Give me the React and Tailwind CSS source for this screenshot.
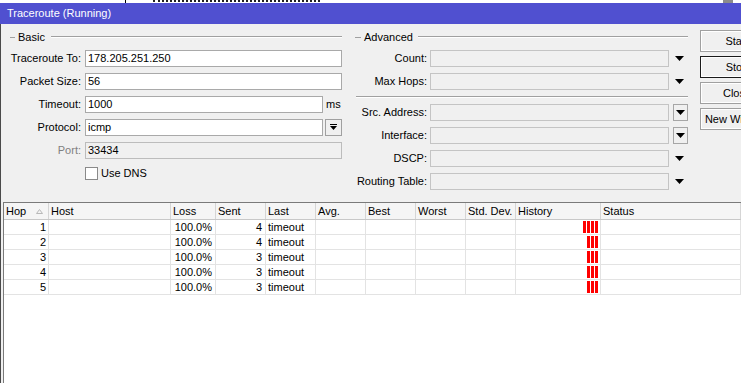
import React from "react";

const FONT = { fontFamily: '"Liberation Sans", Arial, sans-serif' };

function DownArrow() {
  return (
    <svg width="9" height="5" viewBox="0 0 9 5">
      <path d="M0 0H9L4.5 5Z" fill="#000" />
    </svg>
  );
}

function GroupHeader({ label, dashMl, dashW, labelMl, lineMl }) {
  return (
    <div className="flex items-center h-[14px]">
      <div className={`${dashMl} ${dashW} h-px bg-[#a0a0a0]`} />
      <span className={`${labelMl} leading-[14px]`}>{label}</span>
      <div className={`${lineMl} flex-1 flex flex-col`}>
        <div className="h-px bg-[#a0a0a0]" />
        <div className="h-px bg-white" />
      </div>
    </div>
  );
}

function BasicRow({ label, gray, children }) {
  return (
    <div className="flex items-center h-[17px]">
      <div className={`w-[75px] text-right leading-[17px] ${gray ? "text-[#808080]" : "text-black"}`}>{label}</div>
      <div className="ml-[4px] flex items-center h-[17px]">{children}</div>
    </div>
  );
}

function TextBox({ w, value, disabled }) {
  return (
    <div
      className={`${w} h-[17px] border ${disabled ? "border-[#bcbcbc] bg-[#f0f0f0]" : "border-[#a9a9a9] bg-white"} pl-[2px] leading-[15px] text-black overflow-hidden`}
    >
      {value}
    </div>
  );
}

function AdvRow({ label, kind }) {
  return (
    <div className="flex items-center h-[17px]">
      <div className="w-[72px] text-right leading-[17px]">{label}</div>
      <div className="ml-[3px] w-[239px] h-[17px] border border-[#c4c4c4] bg-[#f0f0f0]" />
      {kind === "box" ? (
        <div className="ml-[4px] w-[15px] h-[17px] border border-[#a6a6a6] bg-[#f0f0f0] flex items-center justify-center">
          <DownArrow />
        </div>
      ) : (
        <div className="w-[19px] h-[17px] flex items-center justify-center pl-[2px]">
          <DownArrow />
        </div>
      )}
    </div>
  );
}

function Btn({ label, def }) {
  return (
    <div
      className={`w-[74px] h-[22px] border ${def ? "border-[#1a1a1a]" : "border-[#a0a0a0]"} bg-[#f0f0f0] flex items-center justify-center whitespace-nowrap`}
    >
      <div className="w-full h-full border border-white flex items-center justify-center leading-none">{label}</div>
    </div>
  );
}

const COLS = [
  { t: "Hop", w: "w-[45px]" },
  { t: "Host", w: "w-[122px]" },
  { t: "Loss", w: "w-[45px]" },
  { t: "Sent", w: "w-[50px]" },
  { t: "Last", w: "w-[50px]" },
  { t: "Avg.", w: "w-[50px]" },
  { t: "Best", w: "w-[50px]" },
  { t: "Worst", w: "w-[50px]" },
  { t: "Std. Dev.", w: "w-[50px]" },
  { t: "History", w: "w-[85px]" },
  { t: "Status", w: "flex-1" },
];

const ROWS = [
  { hop: 1, sent: 4, bars: 4 },
  { hop: 2, sent: 4, bars: 3 },
  { hop: 3, sent: 3, bars: 3 },
  { hop: 4, sent: 3, bars: 3 },
  { hop: 5, sent: 3, bars: 3 },
];

export default function App() {
  return (
    <div className="w-[741px] h-[383px] overflow-hidden bg-[#f0f0f0] text-[11px] text-black flex flex-col" style={FONT}>
      {/* strip of window behind */}
      <div className="h-[3px] bg-white flex">
        <div className="ml-[125px] w-px bg-black" />
        <div className="ml-[27px] w-[167px] h-[2px] border-t-2 border-dotted border-[#222]" />
        <div className="ml-[403px] w-[10px] bg-[#8c8c8c]" />
      </div>
      {/* title bar */}
      <div className="h-[21px] bg-[#5050d0] text-white text-[11px] pl-[7px] flex items-center leading-none">
        Traceroute (Running)
      </div>
      {/* body */}
      <div className="flex-1 flex flex-col border-l border-[#4a4a4a]">
        <div className="h-[178px] flex pl-[5px] pt-[6px]">
          {/* Basic */}
          <div className="w-[336px] shrink-0 flex flex-col gap-[6px]">
            <GroupHeader label="Basic" dashMl="ml-[4px]" dashW="w-[5px]" labelMl="ml-[3px]" lineMl="ml-[6px]" />
            <BasicRow label="Traceroute To:">
              <TextBox w="w-[257px]" value="178.205.251.250" />
            </BasicRow>
            <BasicRow label="Packet Size:">
              <TextBox w="w-[257px]" value="56" />
            </BasicRow>
            <BasicRow label="Timeout:">
              <TextBox w="w-[238px]" value="1000" />
              <span className="ml-[3px] leading-[17px]">ms</span>
            </BasicRow>
            <BasicRow label="Protocol:">
              <TextBox w="w-[238px]" value="icmp" />
              <div className="ml-[2px] w-[17px] h-[17px] border border-[#a0a0a0] bg-[#f0f0f0] flex items-center justify-center">
                <svg width="7" height="7" viewBox="0 0 7 7">
                  <rect x="0" y="0" width="7" height="1" fill="#000" />
                  <path d="M0 2H7L3.5 6Z" fill="#000" />
                </svg>
              </div>
            </BasicRow>
            <BasicRow label="Port:" gray>
              <TextBox w="w-[257px]" value="33434" disabled />
            </BasicRow>
            <div className="flex items-center h-[17px] pl-[79px]">
              <div className="w-[13px] h-[13px] border border-[#8a8a8a] bg-white" />
              <span className="ml-[3px] leading-[17px]">Use DNS</span>
            </div>
          </div>
          {/* Advanced */}
          <div className="ml-[13px] w-[333px] shrink-0 flex flex-col gap-[6px]">
            <GroupHeader label="Advanced" dashMl="ml-0" dashW="w-[6px]" labelMl="ml-[3px]" lineMl="ml-[5px]" />
            <AdvRow label="Count:" />
            <AdvRow label="Max Hops:" />
            <div className="flex flex-col ml-[1px]">
              <div className="h-px bg-[#a0a0a0]" />
              <div className="h-px bg-white" />
            </div>
            <AdvRow label="Src. Address:" kind="box" />
            <AdvRow label="Interface:" kind="box" />
            <AdvRow label="DSCP:" />
            <AdvRow label="Routing Table:" />
          </div>
          {/* Buttons */}
          <div className="ml-[12px] shrink-0 flex flex-col gap-[4px]">
            <Btn label="Start" />
            <Btn label="Stop" def />
            <Btn label="Close" />
            <Btn label="New Window" />
          </div>
        </div>
        {/* table */}
        <div className="flex-1 ml-[2px] border-l border-t border-[#7a7a7a] bg-white flex flex-col">
          <div className="h-[17px] flex border-b border-[#c8c8c8] bg-[#f5f5f5]">
            {COLS.map((c, i) => (
              <div
                key={c.t}
                className={`${c.w} shrink-0 h-full border-r border-[#d5d5d5] pl-[2px] leading-[16px] flex items-center whitespace-nowrap overflow-hidden`}
              >
                <span>{c.t}</span>
                {i === 0 && (
                  <svg className="ml-[10px]" width="7" height="5" viewBox="0 0 7 5">
                    <path d="M0.5 4.5H6.5L3.5 0.5Z" fill="#f3f3f3" stroke="#b8b8b8" strokeWidth="1" />
                  </svg>
                )}
              </div>
            ))}
          </div>
          {ROWS.map((r) => (
            <div key={r.hop} className="h-[15px] flex border-b border-[#e3e3e3]">
              <div className="w-[45px] shrink-0 border-r border-[#e3e3e3] text-right pr-[2px] leading-[14px]">{r.hop}</div>
              <div className="w-[122px] shrink-0 border-r border-[#e3e3e3]" />
              <div className="w-[45px] shrink-0 border-r border-[#e3e3e3] text-right pr-[3px] leading-[14px]">100.0%</div>
              <div className="w-[50px] shrink-0 border-r border-[#e3e3e3] text-right pr-[3px] leading-[14px]">{r.sent}</div>
              <div className="w-[50px] shrink-0 border-r border-[#e3e3e3] pl-[2px] leading-[14px]">timeout</div>
              <div className="w-[50px] shrink-0 border-r border-[#e3e3e3]" />
              <div className="w-[50px] shrink-0 border-r border-[#e3e3e3]" />
              <div className="w-[50px] shrink-0 border-r border-[#e3e3e3]" />
              <div className="w-[50px] shrink-0 border-r border-[#e3e3e3]" />
              <div className="w-[85px] shrink-0 border-r border-[#e3e3e3] flex justify-end items-start pt-[1px] pr-[2px] gap-px">
                {Array.from({ length: r.bars }).map((_, k) => (
                  <div key={k} className="w-[3px] h-[12px] bg-[#ff0000]" />
                ))}
              </div>
              <div className="flex-1 border-r border-[#e3e3e3]" />
            </div>
          ))}
        </div>
      </div>
    </div>
  );
}
